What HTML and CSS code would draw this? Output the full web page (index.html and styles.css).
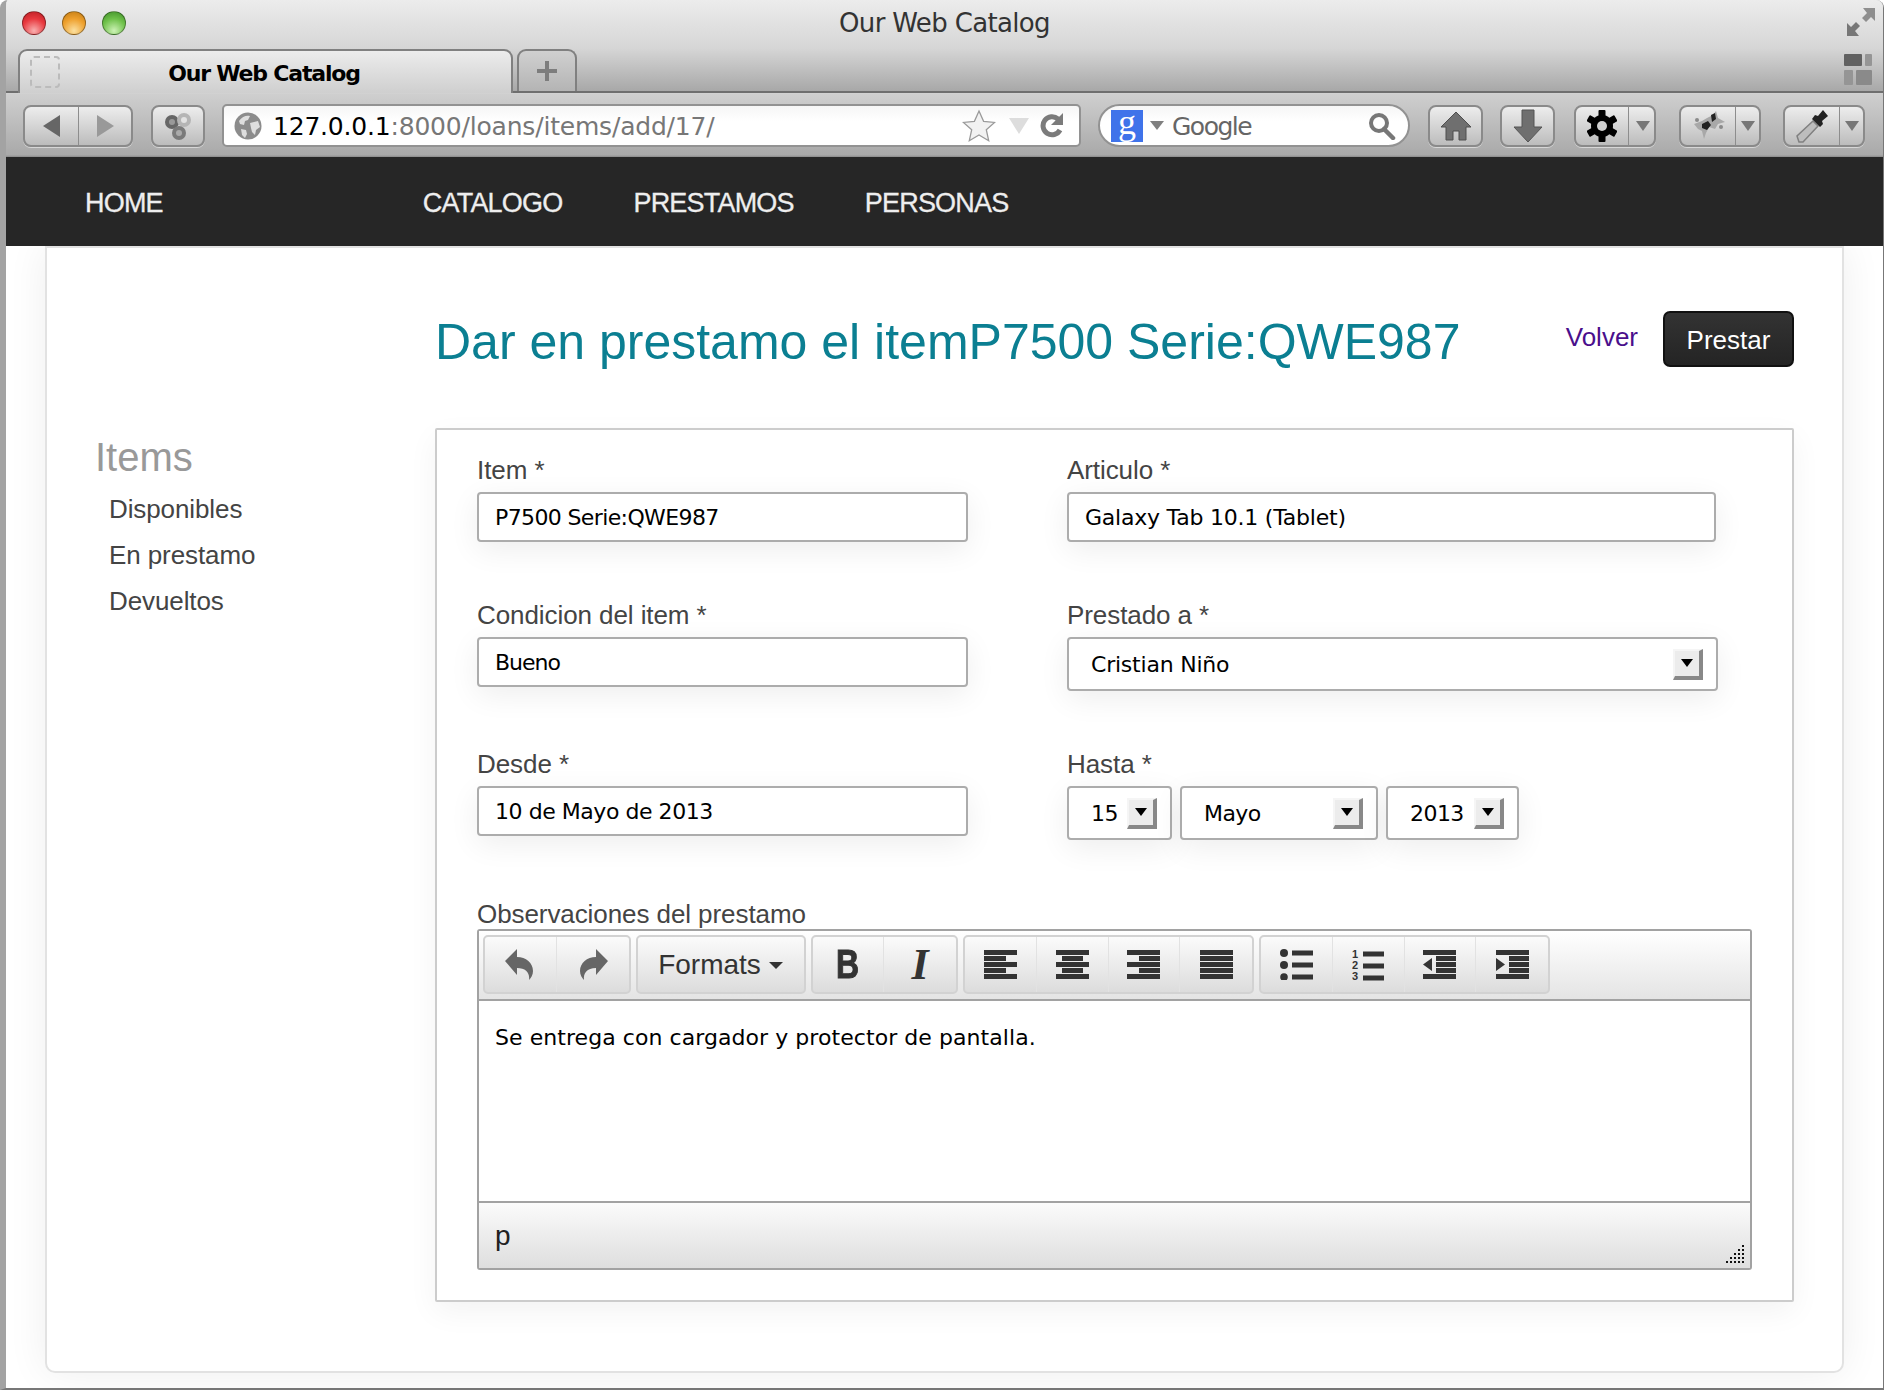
FILE: index.html
```html
<!DOCTYPE html>
<html lang="es">
<head>
	<meta charset="UTF-8">
	<title>Our Web Catalog</title>
	<link rel="stylesheet" href="styles.css">
</head>
<body>
<div class="window">
	<div class="chrome">
		<div class="titlebar">
			<div class="lights">
				<span class="light red"></span>
				<span class="light yellow"></span>
				<span class="light green"></span>
			</div>
			<div class="wintitle">Our Web Catalog</div>
			<div class="winresize">
				<svg width="30" height="30" viewBox="0 0 30 30"><path d="M29 1v13l-4-4-5 5-4-4 5-5-4-5z" fill="#8e8e8e"/><path d="M1 29V16l4 4 5-5 4 4-5 5 4 5z" fill="#777"/></svg>
			</div>
		</div>
		<div class="tabstrip">
			<div class="tab active">
				<span class="favicon"></span>
				<span class="tabtext">Our Web Catalog</span>
			</div>
			<div class="tab newtab">
				<svg width="20" height="20" viewBox="0 0 20 20"><path d="M8 0h4v8h8v4h-8v8H8v-8H0V8h8z" fill="#7d7d7d"/></svg>
			</div>
			<div class="tabview">
				<svg width="30" height="34" viewBox="0 0 30 34"><rect x="0" y="1" width="18" height="12" rx="1" fill="#616161"/><rect x="21" y="1" width="7" height="12" rx="1" fill="#959595"/><rect x="0" y="17" width="9" height="15" rx="1" fill="#959595"/><rect x="12" y="17" width="16" height="15" rx="1" fill="#8a8a8a"/></svg>
			</div>
		</div>
		<div class="toolbar">
			<div class="btn seg navseg">
				<svg width="20" height="24" viewBox="0 0 20 24"><path d="M18 1v22L1 12z" fill="#666"/></svg>
				<i class="sep"></i>
				<svg width="20" height="24" viewBox="0 0 20 24"><path d="M2 1v22l17-11z" fill="#999"/></svg>
			</div>
			<div class="btn ext">
				<svg class="soft" width="30" height="32" viewBox="0 0 30 32"><circle cx="9" cy="12" r="7" fill="#666"/><circle cx="21" cy="10" r="7" fill="#b5b5b5"/><circle cx="16" cy="23" r="7" fill="#7a7a7a"/><circle cx="9" cy="12" r="3" fill="#999"/><circle cx="21" cy="10" r="3" fill="#e2e2e2"/><circle cx="16" cy="23" r="3" fill="#aaa"/></svg>
			</div>
			<div class="urlbar">
				<svg class="globe" width="28" height="28" viewBox="0 0 28 28"><circle cx="14" cy="14" r="13.5" fill="#8c8c8c"/><path d="M5 9c3-5 8-6 11-5l-2 4-3 1-1 4-4-1zM16 11l8-2 2 6-4 3-1 5-3-3-1-4zM7 17l5 1 1 4-2 4-3-3z" fill="#dedede"/></svg>
				<span class="url"><b>127.0.0.1</b>:8000/loans/items/add/17/</span>
				<svg class="star" width="34" height="34" viewBox="0 0 34 34"><path d="M17 2l4.6 10.3 11 1.100-8.300 7.300 2.400 11L17 26l-9.700 5.700 2.400-11L1.400 13.400l11-1.100z" fill="#f2f2f2" stroke="#9a9a9a" stroke-width="1.300"/></svg>
				<svg class="drop" width="20" height="16" viewBox="0 0 20 16"><path d="M0 0h20L10 16z" fill="#ddd"/></svg>
				<svg class="reload" width="24" height="26" viewBox="0 0 24 26"><path d="M20 17a9 9 0 1 1-2-11" fill="none" stroke="#7b7b7b" stroke-width="5"/><path d="M23 0v12H11z" fill="#7b7b7b"/></svg>
			</div>
			<div class="searchbar">
				<span class="glogo">g</span>
				<svg width="14" height="9" viewBox="0 0 14 9"><path d="M0 0h14L7 9z" fill="#808080"/></svg>
				<span class="searchtext">Google</span>
				<svg class="lens" width="28" height="28" viewBox="0 0 28 28"><circle cx="11" cy="11" r="8" fill="none" stroke="#777" stroke-width="4"/><path d="M16 17l9 9" stroke="#777" stroke-width="4.500" stroke-linecap="round"/></svg>
			</div>
			<div class="btn icon home">
				<svg width="32" height="30" viewBox="0 0 32 30"><path d="M16 1L31 16h-5v13h-7v-9h-6v9H6V16H1z" fill="#6f6f6f" stroke="#4e4e4e"/></svg>
			</div>
			<div class="btn icon down">
				<svg width="30" height="34" viewBox="0 0 30 34"><path d="M9 1h12v17h8L15 33 1 18h8z" fill="#6f6f6f" stroke="#555"/></svg>
			</div>
			<div class="btn seg menu gear">
				<svg width="30" height="32" viewBox="-15 -16 30 32"><g fill="#000"><circle r="11"/><rect x="-3.500" y="-16" width="7" height="32" rx="1"/><rect x="-3.500" y="-16" width="7" height="32" rx="1" transform="rotate(60)"/><rect x="-3.500" y="-16" width="7" height="32" rx="1" transform="rotate(120)"/></g><circle r="5" fill="#cfcfcf"/></svg>
				<i class="sep"></i>
				<svg width="14" height="10" viewBox="0 0 14 10"><path d="M0 0h14L7 10z" fill="#777"/></svg>
			</div>
			<div class="btn seg menu puzzle">
				<svg class="soft" width="34" height="32" viewBox="0 0 34 32"><path d="M2 14l8-3 5-3 6-3 3-4 2 7 7 4-7 2-3 5-6-2-3 6-2 6-2-8-4-2z" fill="#a8a8a8"/><path d="M10 14l6-3 3 4-4 5-5-2zM19 5l4-2 1 6-4 3z" fill="#222"/><circle cx="5" cy="10" r="2" fill="#8a8a8a"/><circle cx="29" cy="17" r="2" fill="#8a8a8a"/></svg>
				<i class="sep"></i>
				<svg width="14" height="10" viewBox="0 0 14 10"><path d="M0 0h14L7 10z" fill="#777"/></svg>
			</div>
			<div class="btn seg menu dropper">
				<svg class="soft" width="34" height="34" viewBox="0 0 34 34"><path d="M3 33L1 27l16-15 5 5L7 33z" fill="#bdbdbd" stroke="#808080" stroke-width="1.500"/><path d="M16 10l8 8 3-3-1-3 6-5-5-6-5 6-3-1z" fill="#222"/></svg>
				<i class="sep"></i>
				<svg width="14" height="10" viewBox="0 0 14 10"><path d="M0 0h14L7 10z" fill="#777"/></svg>
			</div>
		</div>
	</div>

	<nav class="mainnav">
		<a class="navhome">HOME</a>
		<a>CATALOGO</a>
		<a>PRESTAMOS</a>
		<a>PERSONAS</a>
	</nav>

	<div class="page">
		<div class="card">
			<div class="heading">
				<h1>Dar en prestamo el itemP7500 Serie:QWE987</h1>
				<a class="volver">Volver</a>
				<a class="prestar">Prestar</a>
			</div>
			<aside class="side">
				<h3>Items</h3>
				<ul>
					<li>Disponibles</li>
					<li>En prestamo</li>
					<li>Devueltos</li>
				</ul>
			</aside>
			<div class="panel">
				<div class="group">
					<label>Item *</label>
					<div class="field caps">P7500 Serie:QWE987</div>
				</div>
				<div class="group">
					<label>Articulo *</label>
					<div class="field wide loose">Galaxy Tab 10.1 (Tablet)</div>
				</div>
				<div class="group">
					<label>Condicion del item *</label>
					<div class="field tight">Bueno</div>
				</div>
				<div class="group">
					<label>Prestado a *</label>
					<div class="select full loose"><span>Cristian Niño</span><i class="arrow"></i></div>
				</div>
				<div class="group">
					<label>Desde *</label>
					<div class="field">10 de Mayo de 2013</div>
				</div>
				<div class="group">
					<label>Hasta *</label>
					<div class="dates">
						<div class="select day"><span>15</span><i class="arrow"></i></div>
						<div class="select month"><span>Mayo</span><i class="arrow"></i></div>
						<div class="select year"><span>2013</span><i class="arrow"></i></div>
					</div>
				</div>
				<div class="group span2">
					<label>Observaciones del prestamo</label>
					<div class="editor">
						<div class="edbar">
							<div class="edgroup">
								<div class="edbtn"><svg width="30" height="33" viewBox="0 0 30 33"><path d="M12 1v8c9 0 16 6 16 14 0 4-2 7-4 9 1-7-3-12-12-12v7L0 13z" fill="#666"/></svg></div>
								<div class="edbtn"><svg width="30" height="33" viewBox="0 0 30 33"><path d="M18 1v8C9 9 2 15 2 23c0 4 2 7 4 9-1-7 3-12 12-12v7l12-14z" fill="#666"/></svg></div>
							</div>
							<div class="edgroup">
								<div class="edbtn formats">Formats<i class="caret"></i></div>
							</div>
							<div class="edgroup">
								<div class="edbtn letter bold"><span>B</span></div>
								<div class="edbtn letter ital">I</div>
							</div>
							<div class="edgroup">
								<div class="edbtn"><svg width="33" height="29" viewBox="0 0 33 29"><path d="M0 0h33v5H0zM0 6h22v5H0zM0 12h33v5H0zM0 18h22v5H0zM0 24h33v5H0z" fill="#333"/></svg></div>
								<div class="edbtn"><svg width="33" height="29" viewBox="0 0 33 29"><path d="M0 0h33v5H0zM6 6h21v5H6zM0 12h33v5H0zM6 18h21v5H6zM0 24h33v5H0z" fill="#333"/></svg></div>
								<div class="edbtn"><svg width="33" height="29" viewBox="0 0 33 29"><path d="M0 0h33v5H0zM12 6h21v5H12zM0 12h33v5H0zM12 18h21v5H12zM0 24h33v5H0z" fill="#333"/></svg></div>
								<div class="edbtn"><svg width="33" height="29" viewBox="0 0 33 29"><path d="M0 0h33v5H0zM0 6h33v5H0zM0 12h33v5H0zM0 18h33v5H0zM0 24h33v5H0z" fill="#333"/></svg></div>
							</div>
							<div class="edgroup">
								<div class="edbtn"><svg width="33" height="31" viewBox="0 0 33 31"><circle cx="4" cy="4" r="4" fill="#333"/><circle cx="4" cy="16" r="4" fill="#333"/><circle cx="4" cy="28" r="3.800" fill="#333"/><path d="M12 1.500h21v5H12zM12 13.500h21v5H12zM12 25.500h21v5H12z" fill="#333"/></svg></div>
								<div class="edbtn"><svg width="33" height="34" viewBox="0 0 33 34"><text x="0" y="10" class="num">1</text><text x="0" y="21" class="num">2</text><text x="0" y="32" class="num">3</text><path d="M11 3.500h21v5H11zM11 15.500h21v5H11zM11 27.500h21v5H11z" fill="#333"/></svg></div>
								<div class="edbtn"><svg width="33" height="29" viewBox="0 0 33 29"><path d="M0 0h33v5H0zM13 6h20v5H13zM13 12h20v5H13zM13 18h20v5H13zM0 24h33v5H0zM9 8v13L0 14.500z" fill="#333"/></svg></div>
								<div class="edbtn"><svg width="33" height="29" viewBox="0 0 33 29"><path d="M0 0h33v5H0zM13 6h20v5H13zM13 12h20v5H13zM13 18h20v5H13zM0 24h33v5H0zM0 8v13l9-6.500z" fill="#333"/></svg></div>
							</div>
						</div>
						<div class="edbody">Se entrega con cargador y protector de pantalla.</div>
						<div class="edstatus">
							<span>p</span>
							<svg class="grip" width="20" height="20" viewBox="0 0 20 20" fill="#111"><rect x="16" y="1" width="2" height="2"/><rect x="16" y="5" width="2" height="2"/><rect x="12" y="5" width="2" height="2"/><rect x="16" y="9" width="2" height="2"/><rect x="12" y="9" width="2" height="2"/><rect x="8" y="9" width="2" height="2"/><rect x="16" y="13" width="2" height="2"/><rect x="12" y="13" width="2" height="2"/><rect x="8" y="13" width="2" height="2"/><rect x="4" y="13" width="2" height="2"/><rect x="16" y="17" width="2" height="2"/><rect x="12" y="17" width="2" height="2"/><rect x="8" y="17" width="2" height="2"/><rect x="4" y="17" width="2" height="2"/><rect x="0" y="17" width="2" height="2"/></svg>
						</div>
					</div>
				</div>
			</div>
		</div>
	</div>
</div>
</body>
</html>
```

FILE: styles.css
```css
*{margin:0;padding:0;box-sizing:border-box;list-style:none;}
html,body{width:1886px;height:1390px;overflow:hidden;background:#fff;}
body{font-family:"Liberation Sans",Arial,sans-serif;color:#444;}
a{text-decoration:none;}
i{font-style:normal;}
svg{display:block;flex:none;}
.soft{filter:blur(.7px);}

.window{width:1884px;height:1390px;border-left:6px solid #a3a3a3;border-right:1px solid #777;border-bottom:2px solid #777;border-radius:8px 8px 0 0;overflow:hidden;background:#fff;}

/* browser chrome */
.chrome{height:157px;background:linear-gradient(#d4d4d4 0,#d4d4d4 93px,#cfcfcf 94px,#a9a9a9 155px,#8a8a8a 157px);}
.titlebar{height:48px;display:grid;grid-template-columns:1fr auto 1fr;align-items:center;background:linear-gradient(#ececec,#d6d6d6);}
.lights{display:flex;gap:16px;padding-left:16px;margin-top:-2px;}
.light{width:24px;height:24px;border-radius:50%;border:1px solid rgba(0,0,0,.35);}
.red{background:radial-gradient(circle at 50% 85%,#f9b0b0 0,#e8393f 55%,#b81c22 100%);}
.yellow{background:radial-gradient(circle at 50% 85%,#fbe0a0 0,#eea02d 55%,#c07a12 100%);}
.green{background:radial-gradient(circle at 50% 85%,#cdf2b6 0,#6fc14a 55%,#3f8e28 100%);}
.wintitle{font:26px "DejaVu Sans",sans-serif;letter-spacing:-.65px;color:#333;margin-top:-3px;}
.winresize{justify-self:end;padding-right:7px;margin-top:-5px;}

.tabstrip{height:45px;display:flex;align-items:flex-end;padding-left:12px;border-bottom:2px solid #6f6f6f;background:linear-gradient(#d6d6d6,#a8a8a8);}
.tab{border:2px solid #808080;border-bottom:0;border-radius:9px 9px 0 0;}
.active{width:495px;height:44px;background:linear-gradient(#ececec,#cfcfcf);display:flex;align-items:center;margin-bottom:-2px;}
.favicon{width:30px;height:32px;margin-left:10px;border:2px dashed #bbb;border-radius:4px;}
.tabtext{flex:1;font:bold 22px "DejaVu Sans",sans-serif;letter-spacing:-1.2px;color:#000;text-align:center;padding:2px 43px 0 0;}
.newtab{width:60px;height:42px;margin-left:4px;background:linear-gradient(#d0d0d0,#b4b4b4);display:flex;align-items:center;justify-content:center;}
.tabview{margin-left:auto;margin-right:9px;align-self:center;}

.toolbar{height:64px;display:flex;align-items:center;padding:1px 0 0 17px;}
.btn{height:42px;border:2px solid #8a8a8a;border-radius:8px;background:linear-gradient(#ededed,#bcbcbc);box-shadow:0 1px 0 rgba(255,255,255,.5);display:flex;align-items:center;justify-content:center;}
.seg .sep,.menu .sep{width:1px;height:38px;background:#8d8d8d;}
.navseg{width:110px;gap:16px;}
.ext{width:54px;margin-left:18px;}
.urlbar{width:859px;height:43px;margin-left:17px;background:linear-gradient(#f6f6f6,#fff 40%);border:2px solid #929292;border-radius:5px;display:flex;align-items:center;padding:0 15px 0 10px;}
.globe{margin-right:11px;}
.url{flex:1;font:25px "DejaVu Sans",sans-serif;letter-spacing:-.2px;color:#777;padding-top:2px;}
.url b{font-weight:normal;color:#000;}
.star{margin-right:13px;}
.drop{margin-right:11px;margin-top:1px;}
.searchbar{width:312px;height:43px;margin-left:17px;background:linear-gradient(#f6f6f6,#fff 40%);border:2px solid #929292;border-radius:22px;display:flex;align-items:center;padding:0 12px 0 11px;}
.glogo{width:32px;height:32px;background:#3f73ea;color:#fff;font:36px/24px "Liberation Serif",serif;text-align:center;margin-right:7px;}
.searchtext{flex:1;font:25px "DejaVu Sans",sans-serif;letter-spacing:-1.5px;color:#666;margin-left:8px;padding-top:2px;}
.home{width:55px;margin-left:18px;}
.down{width:55px;margin-left:17px;}
.menu{width:82px;gap:11px;justify-content:flex-start;padding-left:11px;}
.menu svg:last-child{margin-left:-4px;}
.gear{margin-left:19px;}
.puzzle{margin-left:23px;}
.dropper{margin-left:22px;}
.puzzle,.dropper{gap:9px;}

/* site */
.mainnav{height:89px;background:#262626;display:flex;align-items:center;position:relative;z-index:1;padding:4px 0 0 79px;}
.mainnav a{font-size:27px;letter-spacing:-.8px;color:#eee;margin-right:71px;-webkit-text-stroke:.3px #eee;}
.mainnav .navhome{margin-right:260px;}

.page{padding:0 39px;}
.card{height:1127px;display:grid;grid-template-columns:388px 1359px;grid-template-rows:56px auto;row-gap:61px;align-content:start;padding-top:63px;border:2px solid #e2e2e2;border-radius:0 0 10px 10px;box-shadow:0 0 40px rgba(0,0,0,.07);background:#fff;}

.heading{grid-column:2;display:flex;align-items:center;}
h1{flex:1;font-size:50px;font-weight:normal;color:#0b7f92;margin-top:5px;}
.volver{font-size:26px;color:#4a0f8c;margin-right:25px;margin-top:-3px;}
.prestar{width:131px;height:56px;line-height:54px;text-align:center;font-size:26px;color:#fff;background:linear-gradient(#333,#242424);border:2px solid #111;border-radius:7px;}

.side{padding:6px 0 0 48px;}
.side h3{font-size:40px;line-height:46px;font-weight:normal;color:#999;margin-bottom:6px;}
.side li{padding-left:14px;font-size:26px;line-height:46px;letter-spacing:-.1px;color:#444;}

.panel{height:874px;display:grid;grid-template-columns:491px 1fr;column-gap:99px;row-gap:59px;align-content:start;padding:26px 40px 0 40px;border:2px solid #ccc;border-radius:2px;box-shadow:0 10px 30px rgba(0,0,0,.05);background:#fff;}
.group label{display:block;height:28px;line-height:28px;margin-bottom:8px;font-size:26px;letter-spacing:-.08px;color:#444;}
.span2{grid-column:1/-1;margin-top:1px;}
.span2 label{margin-bottom:1px;}

.field{height:50px;padding-left:16px;font:22px/48px "DejaVu Sans",sans-serif;letter-spacing:-.45px;color:#000;background:#fff;border:2px solid #acacac;border-radius:4px;box-shadow:0 8px 30px rgba(0,0,0,.07);}
.wide{width:649px;}
.select{height:54px;display:flex;align-items:center;justify-content:space-between;padding:0 13px 0 22px;font:22px "DejaVu Sans",sans-serif;letter-spacing:-.55px;color:#000;background:#fff;border:2px solid #acacac;border-radius:4px;box-shadow:0 8px 30px rgba(0,0,0,.07);}
.field.loose,.select.loose{letter-spacing:-.22px;}
.field.tight{letter-spacing:-1px;}
.field.caps{letter-spacing:-.62px;}
.full{width:651px;}
.dates{display:flex;gap:8px;}
.day{width:105px;}
.month{width:198px;}
.year{width:133px;}
.arrow{flex:none;width:30px;height:31px;border:solid;border-width:2px 4px 4px 2px;border-color:#f5f5f5 #888 #888 #f5f5f5;background:#ececec;position:relative;margin-top:1px;}
.arrow:after{content:"";position:absolute;left:6px;top:8px;border:solid transparent;border-width:8px 6px 0;border-top-color:#000;}

.editor{height:341px;border:2px solid #a2a2a2;border-radius:3px;display:flex;flex-direction:column;}
.edbar{height:70px;flex:none;display:flex;gap:5px;padding:4px 0 0 4px;background:linear-gradient(#fff,#e4e4e4);border-bottom:2px solid #a2a2a2;}
.edgroup{height:59px;display:flex;border:2px solid #d2d2d2;border-radius:5px;background:linear-gradient(#fbfbfb,#dcdcdc);}
.edbtn{width:71.75px;display:flex;align-items:center;justify-content:center;border-right:1px solid #e2e2e2;}
.edbtn:last-child{border-right:0;}
.formats{width:166px;gap:8px;font-size:28px;color:#333;}
.caret{border:solid transparent;border-width:7px 7px 0;border-top-color:#333;margin-top:2px;}
.letter{font-size:40px;color:#333;}
.bold{font-weight:bold;-webkit-text-stroke:1px #333;}
.bold span{transform:scaleX(.8);}
.ital{font:italic bold 44px "Liberation Serif",serif;}
.num{font:bold 11px "Liberation Sans",sans-serif;fill:#333;}
.edbody{flex:1;padding:24px 16px;font:22px "DejaVu Sans",sans-serif;letter-spacing:.06px;color:#000;}
.edstatus{height:67px;flex:none;display:flex;align-items:center;justify-content:space-between;padding:0 4px 0 16px;background:linear-gradient(#fbfbfb,#dedede);border-top:2px solid #a2a2a2;font-size:28px;color:#222;}
.grip{align-self:flex-end;margin-bottom:4px;}
```
